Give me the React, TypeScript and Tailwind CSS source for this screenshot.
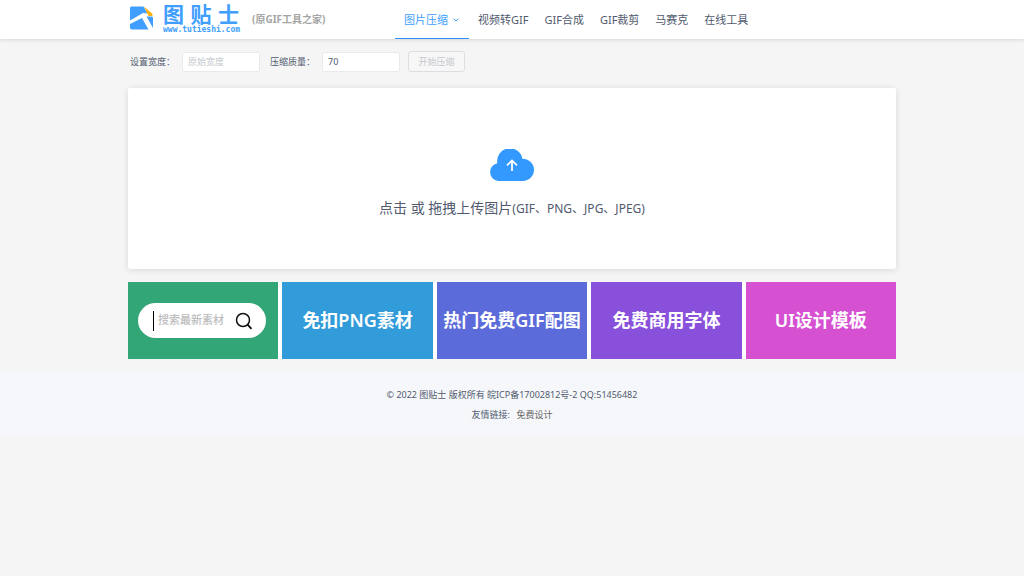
import React from "react";
import { ChevronDown } from "lucide-react";

const navItems = ["视频转GIF", "GIF合成", "GIF裁剪", "马赛克", "在线工具"];

const banners = [
  { label: "免扣PNG素材", color: "bg-[#329bd9]" },
  { label: "热门免费GIF配图", color: "bg-[#5b6bd9]" },
  { label: "免费商用字体", color: "bg-[#8950dc]" },
  { label: "UI设计模板", color: "bg-[#d551d2]" },
];

function LogoMark() {
  return (
    <svg className="h-6 w-6 shrink-0" viewBox="0 0 24 24" aria-hidden="true">
      <path d="M1.5 0.5H13.5L17.5 7.5L13 7L0 14.5V2Q0 0.5 1.5 0.5Z" fill="#409eff" />
      <path d="M14 0.5L22 7.5Q23.5 10 21.5 10H18.5Z" fill="#ffb00d" />
      <path d="M0 18L12 12L18.5 23.5H2Q0 23.5 0 21.5Z" fill="#409eff" />
      <path d="M16.5 10.5H21.5Q23 10.5 23 12V22Z" fill="#409eff" />
    </svg>
  );
}

function Header() {
  return (
    <header className="relative bg-white shadow-[0_1px_4px_rgba(0,0,0,0.12)]">
      <div className="mx-auto flex h-[39px] w-3/4 items-stretch">
        <a href="#home" className="flex items-center pb-1 pl-0.5">
          <LogoMark />
          <span className="ml-[9px] flex w-[76px] flex-col text-[#409eff]">
            <span className="flex justify-between text-[21px] leading-6 font-bold">
              <span>图</span>
              <span>贴</span>
              <span>士</span>
            </span>
            <span className="font-['DejaVu_Sans_Mono',monospace] text-[8px] leading-2 font-bold">www.tutieshi.com</span>
          </span>
        </a>
        <span className="ml-[13px] w-[130px] self-center text-[10px] font-bold text-[#a5a5a5]">(原GIF工具之家)</span>
        <nav className="ml-[13px] flex items-stretch text-[11px] whitespace-nowrap">
          <a href="#compress" className="mr-px flex items-center gap-1 border-b border-[#2d8cf0] px-[9px] pt-0.5 text-[#409eff]">
            图片压缩
            <ChevronDown className="h-2 w-2" strokeWidth={3} />
          </a>
          {navItems.map((item) => (
            <a key={item} href="#tools" className="flex items-center border-b border-transparent px-2 pt-0.5 text-[#515a6e]">
              {item}
            </a>
          ))}
        </nav>
      </div>
    </header>
  );
}

function Settings() {
  return (
    <form className="flex items-center pt-3 pl-0.5 text-[9px] text-[#515a6e]">
      <label htmlFor="width" className="w-[52px]">设置宽度：</label>
      <input id="width" placeholder="原始宽度" className="h-5 w-[78px] rounded-xs border border-[#e8eaec] bg-white px-[5px] placeholder:text-[#c5c8ce]" />
      <label htmlFor="quality" className="ml-2.5 w-[52px]">压缩质量：</label>
      <input id="quality" defaultValue="70" className="h-5 w-[78px] rounded-xs border border-[#e8eaec] bg-white px-[5px]" />
      <button type="button" disabled className="ml-2 h-[21px] w-[57px] rounded-[3px] border border-[#dcdee2] bg-[#f7f7f7] text-[#c5c8ce]">
        开始压缩
      </button>
    </form>
  );
}

function UploadPanel() {
  return (
    <button type="button" className="mt-4 flex w-full flex-col items-center rounded-xs bg-white pt-[61px] pb-[49px] text-[#515a6e] shadow-[0_1px_6px_rgba(0,0,0,0.12)]">
      <svg className="h-8 w-[46px]" viewBox="0 0 46 32" aria-hidden="true">
        <path d="M9.5 32A9 9 0 0 1 8.3 14.2A12.7 12.7 0 0 1 33.4 9.8A11.1 11.1 0 0 1 34.5 32Z" fill="#3399ff" />
        <path d="M23 22V12M18 16.4L23 11.4L28 16.4" fill="none" stroke="#fff" strokeWidth="1.8" />
      </svg>
      <span className="mt-4 text-[14px] leading-[22px]">
        点击 或 拖拽上传图片<span className="text-[12px]">(GIF、PNG、JPG、JPEG)</span>
      </span>
    </button>
  );
}

function Banners() {
  return (
    <section className="mt-[13px] grid grid-cols-5 gap-1 bg-white">
      <div className="flex h-[77px] items-center bg-[#32a676] pr-3 pl-2.5">
        <label className="flex h-[35px] w-full items-center rounded-full bg-white pr-[13px] pl-[15px]">
          <span className="h-5 w-px bg-black" />
          <input aria-label="搜索最新素材" placeholder="搜索最新素材" className="ml-1 min-w-0 flex-1 text-[11px] font-medium placeholder:text-[#bcbcbc]" />
          <svg className="h-[18px] w-[18px] shrink-0" viewBox="0 0 18 18" fill="none" stroke="#111" strokeWidth="1.5" aria-hidden="true">
            <circle cx="8" cy="8" r="6.5" />
            <path d="M12.4 12.4L16.5 16.8" strokeWidth="1.8" />
          </svg>
        </label>
      </div>
      {banners.map(({ label, color }) => (
        <a key={label} href="#materials" className={`flex h-[77px] items-center justify-center text-[18px] font-semibold whitespace-nowrap text-white ${color}`}>
          {label}
        </a>
      ))}
    </section>
  );
}

export default function App() {
  return (
    <div className="min-h-screen bg-[#f5f5f5] font-['Noto_Sans','Noto_Sans_CJK_SC',sans-serif]">
      <Header />
      <main className="mx-auto w-3/4">
        <Settings />
        <UploadPanel />
        <Banners />
      </main>
      <footer className="mt-3 bg-[#f5f7fa] pt-3.5 pb-2.5 text-center text-[9px] leading-5 text-[#515a6e]">
        <p>© 2022 图贴士 版权所有 皖ICP备17002812号-2 QQ:51456482</p>
        <p>
          友情链接: <a href="#design" className="ml-1 text-[#666]">免费设计</a>
        </p>
      </footer>
    </div>
  );
}
